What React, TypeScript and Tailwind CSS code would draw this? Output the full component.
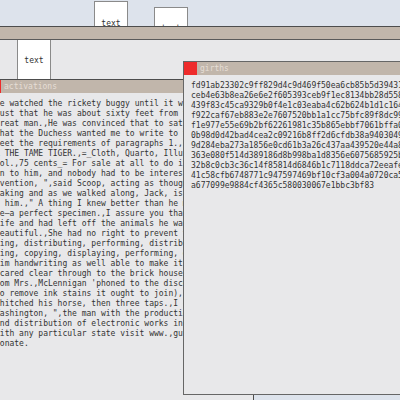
const actLines = [
  "he watched the rickety buggy until it was out of sight",
  "just that he was about sixty feet from the tree",
  "great man.,He was convinced that to satisfy him",
  "what the Duchess wanted me to write to the paper",
  "meet the requirements of paragraphs 1.,E.1 through",
  "R THE TAME TIGER.,=_Cloth, Quarto, Illustrated",
  "Vol.,75 cents_= For sale at all to do it again",
  "in to him, and nobody had to be interested in it",
  "nvention, \",said Scoop, acting as though he knew",
  "taking and as we walked along, Jack, is it true",
  "o him.,\" A thing I knew better than he might",
  "me\u2014a perfect specimen.,I assure you that it is",
  "life and had left off the animals he wanted",
  "beautiful.,She had no right to prevent you from",
  "ding, distributing, performing, distributing or",
  "ying, copying, displaying, performing, distributing",
  "him handwriting as well able to make it? he said",
  "scared clear through to the brick house, and then",
  "rom Mrs.,McLennigan 'phoned to the discovery of",
  "to remove ink stains it ought to join), and so",
  " hitched his horse, then three taps.,I could see",
  "Washington, \",the man with the production of",
  "and distribution of electronic works in formats",
  "with any particular state visit www.,gutenberg.org",
  "donate.",
];

const hexLines = [
  "fd91ab23302c9ff829d4c9d469f50ea6cb85b5d39431a7e2",
  "ceb4e63b8ea26e6e2f605393ceb9f1ec8134bb28d5583c1d",
  "439f83c45ca9329b0f4e1c03eaba4c62b624b1d1c1649e0a",
  "f922caf67eb883e2e7607520bb1a1cc75bfc89f8dc99b4f2",
  "f1e977e55e69b2bf62261981c35b865ebbf7061bffa05d38",
  "0b98d0d42bad4cea2c09216b8ff2d6cfdb38a94030497c61",
  "9d284eba273a1856e0cd61b3a26c437aa439520e44a81f9d",
  "363e080f514d389186d8b998ba1d8356e6075685925b2e07",
  "32b8c0cb3c36c14f85814d6846b1c7118ddca72eeafe8b43",
  "41c58cfb6748771c947597469bf10cf3a004a0720ca56d19",
  "a677099e9884cf4365c580030067e1bbc3bf83",
];

function TitleBar({ title }: { title: string }) {
  return (
    <div className="h-[13px] bg-[#c1b6ab] flex items-center shrink-0">
      <div className="w-[13px] h-[13px] bg-[#ee2b2b] shrink-0" />
      <span className="ml-[3px] text-[#e6ded6]">{title}</span>
    </div>
  );
}

export default function App() {
  return (
    <div className="relative w-[400px] h-[400px] overflow-hidden bg-[#dde3ec] font-['DejaVu_Sans_Mono',monospace] text-[8px] leading-[10px] text-[#333]">
      <div className="absolute left-[94px] top-[1px] w-[34px] h-[46px] bg-white border border-[#8a8a8a] flex items-center justify-center">
        text
      </div>
      <div className="absolute left-[154px] top-[7px] w-[34px] h-[43px] bg-white border border-[#8a8a8a] flex items-center justify-center">
        text
      </div>

      <div className="absolute left-[-10px] top-[26px] w-[430px] h-[300px] border-t border-[#4d4d4d] bg-[#e8e8ea] flex flex-col">
        <div className="h-[13px] bg-[#c1b6ab] border-b border-[#5a5a5a] shrink-0" />
        <div className="flex pl-[27px]">
          <div className="w-[34px] h-[40px] pt-[2px] bg-white border-x border-[#8a8a8a] flex items-center justify-center">
            text
          </div>
        </div>
      </div>

      <div className="absolute left-[-13px] top-[79px] w-[267px] h-[340px] border border-[#4d4d4d] bg-[#e8e8ea] flex flex-col overflow-hidden">
        <TitleBar title="activations" />
        <div className="pl-[7px] pt-[6px] whitespace-pre">
          {actLines.map((l, i) => (
            <div key={i}>{l}</div>
          ))}
        </div>
      </div>

      <div className="absolute left-[183px] top-[61px] w-[240px] h-[334px] border border-[#666] bg-[#e8e8ea] flex flex-col overflow-hidden">
        <TitleBar title="girths" />
        <div className="pl-[7px] pt-[6px] whitespace-pre">
          {hexLines.map((l, i) => (
            <div key={i}>{l}</div>
          ))}
        </div>
      </div>
    </div>
  );
}
